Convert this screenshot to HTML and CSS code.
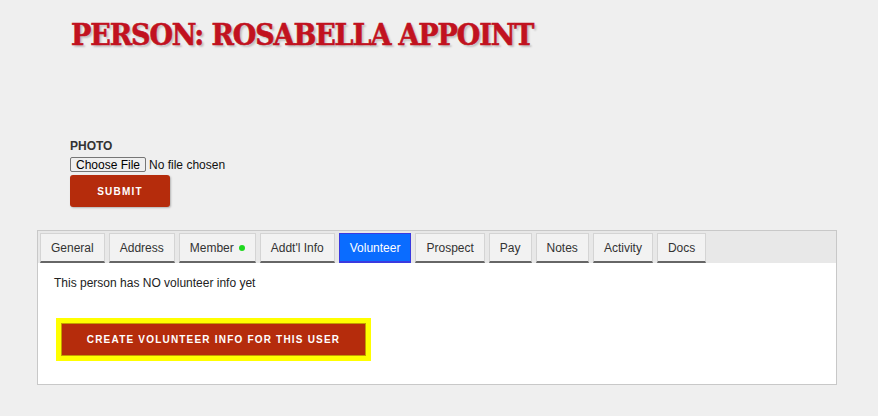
FILE: index.html
```html
<!DOCTYPE html>
<html lang="en">
<head>
  <meta charset="UTF-8" />
  <title>Person: Rosabella Appoint</title>
  <link rel="stylesheet" href="styles.css">
</head>
<body>
  <div class="page">
    <h1>Person: Rosabella Appoint</h1>

    <form class="photo-form">
      <label class="field-label" for="photo">Photo</label>
      <input type="file" id="photo" />
      <button type="button" class="btn-red btn-submit">Submit</button>
    </form>

    <div class="tabs">
      <div class="tab-strip">
        <button class="tab">General</button>
        <button class="tab">Address</button>
        <button class="tab">Member <span class="dot"></span></button>
        <button class="tab">Addt'l Info</button>
        <button class="tab active">Volunteer</button>
        <button class="tab">Prospect</button>
        <button class="tab">Pay</button>
        <button class="tab">Notes</button>
        <button class="tab">Activity</button>
        <button class="tab">Docs</button>
      </div>
      <div class="tab-body">
        <p class="empty-note">This person has NO volunteer info yet</p>
        <div class="highlight">
          <button class="btn-red btn-create">Create volunteer info for this user</button>
        </div>
      </div>
    </div>
  </div>
</body>
</html>
```

FILE: styles.css
```css
body {
  margin: 0;
  background: #efefef;
  font-family: "Liberation Sans", Arial, sans-serif;
  color: #222;
}
.page {
  padding: 17px 41px 30px 37px;
}
h1 {
  margin: 0 0 0 34px;
  font-family: "DejaVu Serif", serif;
  font-stretch: condensed;
  font-weight: bold;
  font-size: 30px;
  letter-spacing: -1.1px;
  line-height: 36px;
  text-transform: uppercase;
  color: #c1121f;
  -webkit-text-stroke: 0.6px #c1121f;
  text-shadow: 2px 2px 2px rgba(0,0,0,0.2);
}
.photo-form {
  display: flex;
  flex-direction: column;
  align-items: flex-start;
  margin: 86px 0 23px 33px;
}
.field-label {
  font-size: 12px;
  font-weight: bold;
  text-transform: uppercase;
  color: #333;
  line-height: 14px;
  margin-bottom: 4px;
}
#photo {
  height: 15px;
  font-family: "Liberation Sans", Arial, sans-serif;
  font-size: 12px;
  color: #111;
}
#photo::file-selector-button {
  height: 15px;
  padding: 0 5px;
  margin-right: 3px;
  font-family: "Liberation Sans", Arial, sans-serif;
  font-size: 12px;
  line-height: 12px;
  background: #efefef;
  border: 1px solid #767676;
  border-radius: 2px;
}
.btn-red {
  background: #b52c0c;
  color: #fff;
  border: none;
  font-family: "Liberation Sans", Arial, sans-serif;
  font-weight: bold;
  font-size: 10px;
  letter-spacing: 1.2px;
  text-transform: uppercase;
  cursor: pointer;
}
.btn-submit {
  width: 100px;
  height: 32px;
  margin-top: 3px;
  border-radius: 3px;
  box-shadow: 1px 1px 2px rgba(0,0,0,0.25);
}
.tabs {
  border: 1px solid #c8c8c8;
  background: #fff;
}
.tab-strip {
  display: flex;
  gap: 4px;
  padding: 2px 2px 0;
  background: #e8e8e8;
}
.tab {
  height: 30px;
  padding: 0 10px;
  background: #f2f2f2;
  border: 1px solid #d4d4d4;
  border-bottom: 2px solid #666;
  font-family: "Liberation Sans", Arial, sans-serif;
  font-size: 12px;
  color: #333;
  display: flex;
  align-items: center;
  gap: 5px;
  cursor: pointer;
}
.tab.active {
  background: #0a6cff;
  border-color: #3a3ae0;
  border-bottom: 2px solid #3a3ae0;
  color: #fff;
}
.dot {
  width: 6px;
  height: 6px;
  border-radius: 50%;
  background: #1ed81e;
}
.tab-body {
  padding: 13px 16px 23px;
}
.empty-note {
  margin: 0 0 28px;
  font-size: 12px;
  line-height: 14px;
  color: #222;
}
.highlight {
  display: inline-block;
  margin-left: 2px;
  padding: 5px;
  background: #ffff00;
}
.btn-create {
  display: block;
  width: 305px;
  height: 33px;
  border: 1px solid #c3a000;
}
```
